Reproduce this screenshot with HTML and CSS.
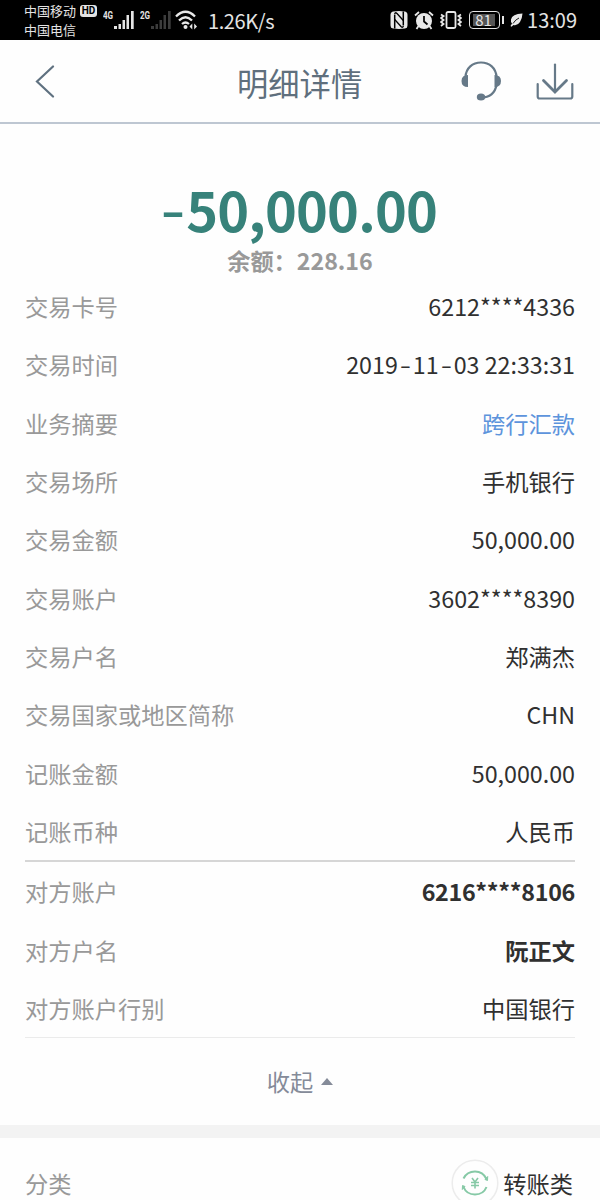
FILE: index.html
```html
<!DOCTYPE html>
<html lang="zh-CN">
<head>
    <meta charset="UTF-8">
    <meta name="viewport" content="width=device-width, initial-scale=1.0">
    <title>明细详情</title>
    <link rel="stylesheet" href="styles.css">
</head>
<body>
    <div class="status-bar">
        <div class="carriers">
            <div class="carrier">中国移动 <span class="hd">HD</span></div>
            <div class="carrier">中国电信</div>
        </div>
        <div class="signal">
            <span class="net">4G</span>
            <svg width="20" height="19" viewBox="0 0 20 19" fill="#e4e4e4"><path d="M0 16h3v3H0zM4.500 14h2.500v5H4.500zM8.500 10h2.500v9H8.500zM12.500 5h2.500v14h-2.500zM17 1h2.700v18H17z"/></svg>
        </div>
        <div class="signal">
            <span class="net">2G</span>
            <svg width="20" height="19" viewBox="0 0 20 19" fill="#3c3c3c"><path d="M0 16h3v3H0zM4.500 14h2.500v5H4.500zM8.500 10h2.500v9H8.500zM12.500 5h2.500v14h-2.500zM17 1h2.700v18H17z"/></svg>
        </div>
        <svg class="wifi" width="23" height="20" viewBox="0 0 23 20" fill="none" stroke="#e8e8e8" stroke-width="2.300">
            <path d="M1 6.500Q10.500-3 20 6.500M4 10.500Q10.500 4 17 10.500M7 14Q10.500 11 14 14"/>
            <circle cx="10.500" cy="17" r="2" fill="#e8e8e8" stroke="none"/>
            <path d="M14.500 16.500l2.800-3v6zM22 16.500l-2.800-3v6z" fill="#e8e8e8" stroke="none"/>
        </svg>
        <span class="speed">1.26K/s</span>
        <div class="status-right">
            <svg width="18" height="18" viewBox="0 0 18 18">
                <path d="M3 .5Q9-.5 15 .5 17.500 1 17.500 4v10q0 3-2.500 3.500-6 .8-12 0Q.5 17 .5 14V4Q.5 1 3 .5z" fill="#e8e8e8"/>
                <path d="M4.700 17.500V3.500M13.300 .5V14.500" fill="none" stroke="#000" stroke-width="1.500"/>
                <path d="M4.700 3Q5 .8 7 2.500L13.300 9.500M4.700 8.500L11 15.500q2 1.700 2.300-.5" fill="none" stroke="#000" stroke-width="1.300"/>
            </svg>
            <svg class="alarm" width="20" height="19" viewBox="0 0 20 19">
                <path d="M1 4.500L5 1M19 4.500L15 1M4.500 15L2.500 18M15.500 15l2 3" stroke="#e8e8e8" stroke-width="1.800"/>
                <circle cx="10" cy="10" r="8" fill="#e8e8e8"/>
                <path d="M10 5v5.500l3.500 3" fill="none" stroke="#000" stroke-width="1.700"/>
            </svg>
            <svg class="vibrate" width="22" height="18" viewBox="0 0 22 18" fill="none" stroke="#e8e8e8">
                <rect x="6.500" y="1" width="9" height="16" rx="1.500" stroke-width="1.800"/>
                <path d="M1 3.500l2.500 1.500L1 7l2.500 2L1 11l2.500 2L1 15M21 3.500L18.500 5 21 7l-2.500 2 2.500 2-2.500 2 2.500 2" stroke-width="1.800"/>
            </svg>
            <span class="battery"><span class="battery-level">81</span></span>
            <svg width="13" height="14" viewBox="0 0 13 14">
                <path d="M12.500.5Q2 1 1 6.500 .5 9 2 10.500L.5 13l1 .7L3.500 12q4 1 6.500-3Q12.300 5 12.500.5z" fill="#e8e8e8"/>
                <path d="M9 5Q5.500 6.500 3 10.500" fill="none" stroke="#000" stroke-width=".9"/>
            </svg>
            <span class="clock">13:09</span>
        </div>
    </div>

    <header class="nav">
        <svg width="20" height="34" viewBox="0 0 20 34" fill="none" stroke="#5f7180" stroke-width="2.200" stroke-linecap="round">
            <path d="M18 2.500L2 17.500 18 32.500"/>
        </svg>
        <h1 class="nav-title">明细详情</h1>
        <div class="nav-actions">
            <svg width="40" height="40" viewBox="0 0 40 40" fill="none" stroke="#667988" stroke-width="2.200">
                <path d="M4.500 16C5 7 11.500 1.500 20 1.500S35 7 35.500 16M35.500 24C34 32 29 36.500 20 36.500"/>
                <path d="M7 14v12q-6.500 0-6.500-6T7 14zM33.500 14v12q6.500 0 6.500-6T33.500 14z" fill="#667988" stroke="none"/>
                <ellipse cx="20" cy="36" rx="4.200" ry="3.500" fill="#667988" stroke="none"/>
            </svg>
            <svg width="38" height="38" viewBox="0 0 38 38" fill="none" stroke="#667988" stroke-width="2.200" stroke-linecap="round">
                <path d="M1.700 22v12.500q0 2 2 2h30.600q2 0 2-2V22"/>
                <path d="M19 2.500V29"/>
                <path d="M7.500 18.500L19 30l11.500-11.500" stroke-width="2.800"/>
            </svg>
        </div>
    </header>

    <main>
        <div class="amount"><span class="minus">-</span>50,000.00</div>
        <div class="balance">余额：228.16</div>

        <div class="list">
            <div class="row"><span class="label">交易卡号</span><span class="value">6212****4336</span></div>
            <div class="row"><span class="label">交易时间</span><span class="value">2019<span class="dash">-</span>11<span class="dash">-</span>03 22:33:31</span></div>
            <div class="row"><span class="label">业务摘要</span><span class="value link">跨行汇款</span></div>
            <div class="row"><span class="label">交易场所</span><span class="value">手机银行</span></div>
            <div class="row"><span class="label">交易金额</span><span class="value">50,000.00</span></div>
            <div class="row"><span class="label">交易账户</span><span class="value">3602****8390</span></div>
            <div class="row"><span class="label">交易户名</span><span class="value">郑满杰</span></div>
            <div class="row"><span class="label">交易国家或地区简称</span><span class="value">CHN</span></div>
            <div class="row"><span class="label">记账金额</span><span class="value">50,000.00</span></div>
            <div class="row"><span class="label">记账币种</span><span class="value">人民币</span></div>
        </div>
        <div class="list list-other">
            <div class="row"><span class="label">对方账户</span><span class="value strong account">6216****8106</span></div>
            <div class="row"><span class="label">对方户名</span><span class="value strong">阮正文</span></div>
            <div class="row"><span class="label">对方账户行别</span><span class="value">中国银行</span></div>
        </div>
        <div class="collapse">收起 <span class="arrow-up"></span></div>

        <div class="category">
            <span class="label">分类</span>
            <div class="category-value">
                <svg width="48" height="48" viewBox="0 0 48 48" fill="none">
                    <circle cx="24" cy="24" r="22.800" stroke="#ececec" stroke-width="1.500"/>
                    <g stroke="#86c9a6" stroke-width="2">
                        <path d="M12.500 19.500Q16 12.500 24 12.500q8 0 11.500 7.500M35.500 28q-3 7.500-11.500 7.500-8.500 0-11.500-7.500"/>
                        <path d="M34 20.500l2.500 1 .2-4zM14 27.500l-2.500-1-.2 4z" fill="#86c9a6" stroke-width="1"/>
                        <path d="M21 19l3 4 3-4M20 23.500h8M20 26.500h8M24 23v6.500" stroke-width="1.600"/>
                    </g>
                </svg>
                <span>转账类</span>
            </div>
        </div>
    </main>
</body>
</html>
```
FILE: styles.css
```css
* {
    box-sizing: border-box;
}
body {
    margin: 0;
    height: 1200px;
    overflow: hidden;
    background: #fefefe;
    color: #303030;
    font-family: "Noto Sans CJK SC", sans-serif;
    font-size: 23.25px;
}
svg {
    display: block;
    flex: none;
}

/* status bar */
.status-bar {
    display: flex;
    height: 40px;
    padding-left: 24px;
    background: #000;
    color: #e4e4e4;
    white-space: nowrap;
}
.carriers {
    width: 79px;
    padding-top: 1px;
}
.carrier {
    display: flex;
    align-items: center;
    gap: 4px;
    height: 19px;
    font-size: 13px;
    line-height: 19px;
}
.hd {
    width: 17px;
    height: 12px;
    border-radius: 3px;
    background: #e4e4e4;
    color: #000;
    font: bold 10px/12px Roboto, sans-serif;
    text-align: center;
}
.signal {
    display: flex;
    width: 37px;
    padding-top: 10px;
}
.net {
    width: 11px;
    margin-top: -1px;
    font: bold 11.5px/12px Roboto, sans-serif;
    transform: scaleX(0.7);
    transform-origin: left;
}
.wifi {
    margin: 10px 0 0 -2px;
}
.speed {
    margin-left: 10px;
    font-size: 20px;
    line-height: 41px;
    letter-spacing: -0.4px;
}
.status-right {
    display: flex;
    align-items: center;
    margin-left: auto;
    padding-right: 23px;
}
.alarm {
    margin-left: 6px;
}
.vibrate {
    margin-left: 6px;
}
.battery {
    position: relative;
    width: 31px;
    height: 18px;
    margin: 0 10px 0 7px;
    padding: 2px 1.5px;
    border: 1.5px solid #e4e4e4;
    border-radius: 4px;
}
.battery::after {
    content: "";
    position: absolute;
    right: -5px;
    top: 4px;
    width: 2px;
    height: 8px;
    background: #e4e4e4;
}
.battery-level {
    display: block;
    width: 22px;
    height: 12px;
    margin-left: 1px;
    background: #555;
    font-size: 15px;
    line-height: 12px;
    text-align: center;
}
.clock {
    margin-left: 4px;
    font-size: 20px;
    line-height: 40px;
}

/* title bar */
.nav {
    display: grid;
    grid-template-columns: 202px 1fr auto;
    align-items: center;
    height: 84px;
    padding: 0 26px 0 35px;
    border-bottom: 2px solid #bec7d2;
}
.nav-title {
    margin: 0;
    padding-top: 3px;
    color: #5f6f7d;
    font-size: 31.3px;
    font-weight: 400;
    line-height: 40px;
}
.nav-actions {
    display: flex;
    align-items: center;
    gap: 35px;
}

/* amount */
.amount {
    padding-top: 56px;
    color: #37827a;
    font-size: 54px;
    font-weight: 700;
    line-height: 58px;
    letter-spacing: -0.8px;
    text-align: center;
}
.minus {
    display: inline-block;
    margin-right: 4px;
    transform: scale(1.25, 0.8);
}
.balance {
    height: 39px;
    padding-top: 5px;
    color: #999;
    font-size: 23.2px;
    font-weight: 700;
    line-height: 34px;
    text-align: center;
}

/* detail rows */
.list {
    margin: 0 25px;
    border-bottom: 2px solid #d6d6d6;
}
.list-other {
    border-bottom: 1.5px solid #ebebeb;
}
.row {
    display: flex;
    align-items: center;
    justify-content: space-between;
    height: 58.33px;
}
.label {
    color: #999;
}
.dash {
    display: inline-block;
    width: 15px;
    text-align: center;
    transform: scaleX(1.4);
}
.link {
    color: #5d94dc;
}
.strong {
    font-weight: 700;
}
.account {
    letter-spacing: -0.3px;
}
.collapse {
    display: flex;
    align-items: center;
    justify-content: center;
    gap: 8px;
    height: 87px;
    padding-bottom: 1px;
    color: #858b99;
}
.arrow-up {
    border: 6px solid transparent;
    border-top: 0;
    border-bottom: 7px solid #858b99;
}

/* category */
.category {
    display: flex;
    align-items: center;
    justify-content: space-between;
    height: 102px;
    padding: 0 27px 0 25px;
    border-top: 13px solid #f3f3f3;
}
.category-value {
    display: flex;
    align-items: center;
    gap: 4px;
}
```
